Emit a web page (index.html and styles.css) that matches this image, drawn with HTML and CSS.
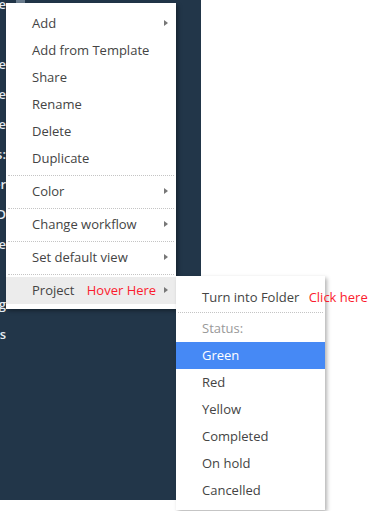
FILE: index.html
```html
<!DOCTYPE html>
<html lang="en">
<head>
  <meta charset="UTF-8">
  <meta name="viewport" content="width=device-width, initial-scale=1.0">
  <title>Context Menu</title>
  <link rel="stylesheet" href="styles.css">
</head>
<body>
  <div class="app">
    <aside class="sidebar">
      <ul class="nav">
        <li class="nav-item"><span>Home</span><i class="nav-icon"></i></li>
        <li class="nav-item"><span></span></li>
        <li class="nav-item"><span>Profile</span></li>
        <li class="nav-item"><span>Archive</span></li>
        <li class="nav-item"><span>Template</span></li>
        <li class="nav-item"><span>Notes:</span></li>
        <li class="nav-item"><span>Folder</span></li>
        <li class="nav-item"><span>Team D</span></li>
        <li class="nav-item"><span>Shared We</span></li>
        <li class="nav-item"><span></span></li>
        <li class="nav-item"><span>Settings g</span></li>
        <li class="nav-item"><span>Projects</span></li>
      </ul>
    </aside>

    <div class="menu">
      <div class="menu-item has-sub">Add</div>
      <div class="menu-item">Add from Template</div>
      <div class="menu-item">Share</div>
      <div class="menu-item">Rename</div>
      <div class="menu-item">Delete</div>
      <div class="menu-item">Duplicate</div>
      <div class="menu-sep"></div>
      <div class="menu-item has-sub">Color</div>
      <div class="menu-sep"></div>
      <div class="menu-item has-sub">Change workflow</div>
      <div class="menu-sep"></div>
      <div class="menu-item has-sub">Set default view</div>
      <div class="menu-sep"></div>
      <div class="menu-item has-sub hover">
        Project <span class="hint hint-hover">Hover Here</span>

        <div class="menu submenu">
          <div class="menu-item">Turn into Folder <span class="hint hint-click">Click here</span></div>
          <div class="menu-sep"></div>
          <div class="menu-label">Status:</div>
          <div class="menu-item active">Green</div>
          <div class="menu-item">Red</div>
          <div class="menu-item">Yellow</div>
          <div class="menu-item">Completed</div>
          <div class="menu-item">On hold</div>
          <div class="menu-item">Cancelled</div>
        </div>
      </div>
    </div>
  </div>
</body>
</html>
```

FILE: styles.css
```css
/* General Styles */
* {
  margin: 0;
  padding: 0;
  box-sizing: border-box;
}

body {
  font-family: 'Open Sans', 'Liberation Sans', sans-serif;
  font-size: 13px;
  background-color: #fff;
  color: #444;
}

.app {
  position: relative;
  height: 511px;
  overflow: hidden;
}

/* Sidebar */
.sidebar {
  width: 201px;
  height: 100%;
  background-color: #223649;
}

.nav {
  list-style: none;
  margin-top: -11px;
}

.nav-item {
  display: flex;
  align-items: center;
  height: 30px;
  color: #e6ecf2;
  font-weight: 600;
  white-space: nowrap;
}

.nav-item span {
  display: flex;
  justify-content: flex-end;
  width: 6px;
  overflow: hidden;
}

.nav-icon {
  display: block;
  width: 9px;
  height: 9px;
  margin-left: 10px;
  margin-top: -12px;
  background: #6b7d8f;
}

/* Context menu */
.menu {
  position: absolute;
  top: 3px;
  left: 6px;
  width: 170px;
  padding: 7px 0 5px;
  background: #fff;
  box-shadow: 2px 2px 4px rgba(0, 0, 0, 0.35);
}

.menu-item {
  position: relative;
  height: 27px;
  line-height: 27px;
  padding-left: 26px;
  white-space: nowrap;
}

.has-sub::after {
  content: '';
  position: absolute;
  right: 8px;
  top: 10px;
  border-left: 4px solid #777;
  border-top: 3.5px solid transparent;
  border-bottom: 3.5px solid transparent;
}

.menu-item.hover {
  background: #ececec;
}

.menu-sep {
  margin: 3px 2px 2px;
  border-top: 1px dotted #c4c4c4;
}

.menu-label {
  height: 27px;
  line-height: 27px;
  padding-left: 26px;
  color: #999;
}

.hint {
  margin-left: 9px;
  color: #fb1b2e;
}

.hint-click {
  margin-left: 6px;
}

/* Submenu */
.submenu {
  top: -1px;
  left: 170px;
  width: 149px;
  padding: 8px 0 6px;
  box-shadow: 2px 2px 4px rgba(0, 0, 0, 0.3);
}

.submenu .menu-sep {
  margin: 1px 2px 2px;
}

.submenu .menu-item {
  color: #444;
}

.submenu .menu-item.active {
  background: #4689f5;
  color: #fff;
}
```
